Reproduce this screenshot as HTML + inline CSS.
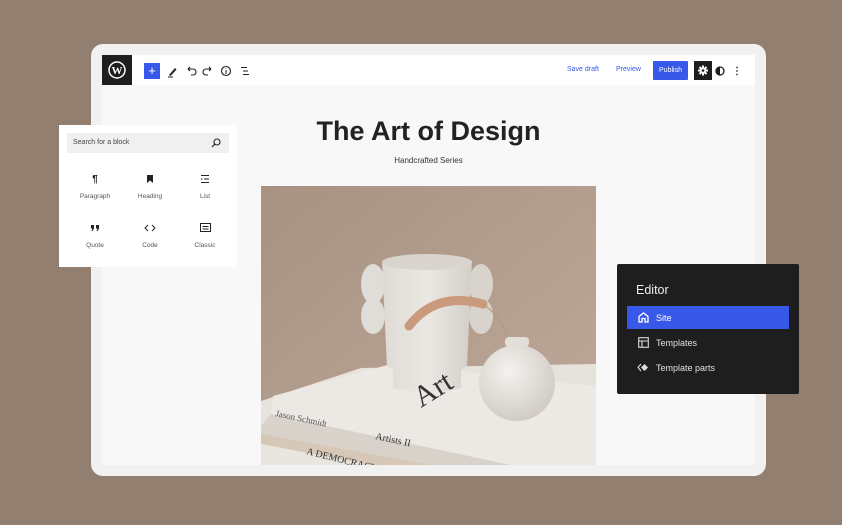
<!DOCTYPE html>
<html><head><meta charset="utf-8"><style>
*{margin:0;padding:0;box-sizing:border-box}
body{width:842px;height:525px;background:#927f6f;position:relative;overflow:hidden;font-family:"Liberation Sans",sans-serif}
.frame{position:absolute;left:91px;top:44px;width:675px;height:432px;background:#f1f1f1;border-radius:12px}
.editor{position:absolute;left:102px;top:55px;width:653px;height:410px;background:#f9f8f8;overflow:hidden}
.tb{position:absolute;left:0;top:0;width:653px;height:30px;background:#fff}
.wp{position:absolute;left:0;top:0;width:30px;height:30px;background:#1e1e1e}
.abs{position:absolute}
.title{position:absolute;left:0;width:653px;top:61px;text-align:center;font-size:27px;font-weight:bold;color:#222}
.sub{position:absolute;left:0;width:653px;top:101px;text-align:center;font-size:8px;color:#333}
.inserter{position:absolute;left:59px;top:125px;width:178px;height:142px;background:#fff}
.search{position:absolute;left:8px;top:8px;width:162px;height:20px;background:#f0f0f0;font-size:7px;color:#444;padding:6px 6px}
.item{position:absolute;width:50px;text-align:center;font-size:6.5px;color:#555}
.item .ic{height:14px;font-size:10px;color:#222;margin-bottom:5px}
.dark{position:absolute;left:617px;top:264px;width:182px;height:130px;background:#1e1e1e;border-radius:2px;color:#e0e0e0}
.row{position:absolute;left:10px;width:162px;height:23px;font-size:9px;padding:7px 0 0 29px}
</style></head><body>
<div class="frame"></div>
<div class="editor">
  <div class="tb">
    <div class="wp"><svg width="30" height="30" viewBox="0 0 30 30"><circle cx="15" cy="15" r="8" fill="none" stroke="#fff" stroke-width="1.5"/><text x="15" y="19" text-anchor="middle" font-family="Liberation Serif" font-weight="bold" font-size="11" fill="#fff">W</text></svg></div>
    <div class="abs" style="left:42px;top:8px;width:16px;height:16px;background:#3858e9;color:#fff;font-size:13px;line-height:15px;text-align:center">+</div>
    <svg class="abs" style="left:64px;top:8px" width="100" height="16" viewBox="0 0 100 16">
      <path d="M3 12 L9 5 L10.5 6.5 L4.5 13 Z" fill="#1e1e1e"/><path d="M2 14h5" stroke="#1e1e1e"/>
      <path d="M22 6 h5 a3 3 0 0 1 0 6 h-2 M22 6 l2 -2 M22 6 l2 2" fill="none" stroke="#1e1e1e" stroke-width="1.1"/>
      <path d="M45 6 h-5 a3 3 0 0 0 0 6 h2 M45 6 l-2 -2 M45 6 l-2 2" fill="none" stroke="#1e1e1e" stroke-width="1.1"/>
      <circle cx="60" cy="8" r="4.5" fill="none" stroke="#1e1e1e" stroke-width="1.1"/><path d="M60 7v4M60 5.5v.5" stroke="#1e1e1e"/>
      <path d="M75 4.5h6M77 8h5M77 11.5h6" stroke="#1e1e1e" stroke-width="1.1"/>
    </svg>
    <div class="abs" style="left:465px;top:11px;font-size:7px;color:#3858e9">Save draft</div>
    <div class="abs" style="left:514px;top:11px;font-size:7px;color:#3858e9">Preview</div>
    <div class="abs" style="left:551px;top:6px;width:35px;height:19px;background:#3858e9;color:#fff;font-size:7px;text-align:center;line-height:19px;border-radius:1px">Publish</div>
    <div class="abs" style="left:592px;top:6px;width:18px;height:19px;background:#1e1e1e">
      <svg width="18" height="19"><g fill="#fff"><circle cx="9" cy="9.5" r="3.2"/><rect x="8" y="4.5" width="2" height="10"/><rect x="4" y="8.5" width="10" height="2"/><rect x="8" y="4.5" width="2" height="10" transform="rotate(45 9 9.5)"/><rect x="8" y="4.5" width="2" height="10" transform="rotate(-45 9 9.5)"/></g><circle cx="9" cy="9.5" r="1.3" fill="#1e1e1e"/></svg>
    </div>
    <svg class="abs" style="left:613px;top:10px" width="30" height="12"><circle cx="5" cy="6" r="4" fill="none" stroke="#1e1e1e" stroke-width="1.3"/><path d="M5 2a4 4 0 0 0 0 8z" fill="#1e1e1e"/><circle cx="22" cy="2.5" r=".9" fill="#333"/><circle cx="22" cy="6" r=".9" fill="#333"/><circle cx="22" cy="9.5" r=".9" fill="#333"/></svg>
  </div>
  <div class="title">The Art of Design</div>
  <div class="sub">Handcrafted Series</div>
  <svg class="abs" style="left:159px;top:131px" width="335" height="279" viewBox="0 0 335 279">
    <defs>
      <linearGradient id="bg" x1="0" y1="0" x2="1" y2="1"><stop offset="0" stop-color="#a89282"/><stop offset="1" stop-color="#bea99a"/></linearGradient>
      <linearGradient id="v" x1="0" x2="1"><stop offset="0" stop-color="#dedad5"/><stop offset=".5" stop-color="#ebe8e4"/><stop offset="1" stop-color="#d3cec8"/></linearGradient>
      <radialGradient id="sv" cx=".4" cy=".35" r=".7"><stop offset="0" stop-color="#f4f2ef"/><stop offset="1" stop-color="#cfc9c2"/></radialGradient>
    </defs>
    <rect width="335" height="279" fill="url(#bg)"/>
    <polygon points="0,215 100,182 335,178 335,279 0,279" fill="#e6e2dc"/>
    <polygon points="12,210 130,178 335,200 335,279 250,279 10,228" fill="#ece9e4"/>
    <polygon points="10,228 250,279 0,279 0,240" fill="#d8d2ca"/>
    <polygon points="0,248 170,279 0,279" fill="#d6c7b6"/>
    <polygon points="0,258 110,279 0,279" fill="#e9e5df"/>
    <ellipse cx="112" cy="98" rx="12" ry="20" fill="#e0dcd7"/>
    <ellipse cx="112" cy="130" rx="12" ry="18" fill="#e0dcd7"/>
    <ellipse cx="220" cy="98" rx="12" ry="20" fill="#d8d3cd"/>
    <ellipse cx="220" cy="130" rx="12" ry="18" fill="#d8d3cd"/>
    <path d="M121 75 Q166 64 211 75 L206 180 L200 184 L200 202 Q166 210 132 202 L132 184 L126 180 Z" fill="url(#v)"/>
    <ellipse cx="166" cy="76" rx="45" ry="8" fill="#d9d4ce"/>
    <path d="M148 140 Q175 105 222 118" stroke="#c99a7d" stroke-width="9" fill="none" stroke-linecap="round"/>
    <path d="M222 118 Q242 132 247 155" stroke="#b99377" stroke-width="1" fill="none"/>
    <rect x="244" y="151" width="24" height="10" rx="4" fill="#e2ded8"/>
    <circle cx="256" cy="197" r="38" fill="url(#sv)"/>
    <text x="14" y="230" transform="rotate(12 14 230)" font-family="Liberation Serif" font-size="9" fill="#555">Jason Schmidt</text>
    <text x="114" y="253" transform="rotate(12 114 253)" font-family="Liberation Serif" font-size="10" fill="#333">Artists II</text>
    <text x="45" y="268" transform="rotate(14 45 268)" font-family="Liberation Serif" font-size="10" fill="#333">A DEMOCRACY</text>
    <text x="160" y="222" transform="rotate(-32 160 222)" font-family="Liberation Serif" font-size="30" fill="#333">Art</text>
  </svg>
</div>
<div class="inserter">
  <div class="search">Search for a block<svg style="position:absolute;right:8px;top:5px" width="10" height="10"><circle cx="6" cy="4" r="3" fill="none" stroke="#222" stroke-width="1.1"/><path d="M4 6L1 9" stroke="#222" stroke-width="1.2"/></svg></div>
  <div class="item" style="left:11px;top:49px"><div class="ic" style="font-weight:bold">¶</div>Paragraph</div>
  <div class="item" style="left:66px;top:49px"><div class="ic"><svg width="8" height="10"><path d="M1 1h6v8L4 6.5 1 9z" fill="#222"/></svg></div>Heading</div>
  <div class="item" style="left:121px;top:49px"><div class="ic"><svg width="10" height="10"><path d="M1 1.5h8M4 5h5M1 8.5h8M1 5h1.5" stroke="#222"/></svg></div>List</div>
  <div class="item" style="left:11px;top:98px"><div class="ic"><svg width="10" height="10"><path d="M1 2h3v3.5L2.5 8H1.5L2.5 5.5H1zM6 2h3v3.5L7.5 8H6.5L7.5 5.5H6z" fill="#222"/></svg></div>Quote</div>
  <div class="item" style="left:66px;top:98px"><div class="ic"><svg width="12" height="10"><path d="M4 2L1 5l3 3M8 2l3 3-3 3" fill="none" stroke="#222" stroke-width="1"/></svg></div>Code</div>
  <div class="item" style="left:121px;top:98px"><div class="ic"><svg width="11" height="9"><rect x=".5" y=".5" width="10" height="8" fill="none" stroke="#222"/><path d="M2.5 3.5h6M2.5 6h6" stroke="#222"/></svg></div>Classic</div>
</div>
<div class="dark">
  <div class="abs" style="left:19px;top:19px;font-size:12.5px;color:#eee">Editor</div>
  <div class="row" style="top:42px;background:#3858e9;color:#fff">
    <svg class="abs" style="left:11px;top:6px" width="11" height="11"><path d="M1 10V4.5L5.5 1 10 4.5V10H7V6.5H4V10Z" fill="none" stroke="#fff" stroke-width="1.3"/></svg>Site</div>
  <div class="row" style="top:67px">
    <svg class="abs" style="left:11px;top:6px" width="11" height="11"><rect x=".7" y=".7" width="9.6" height="9.6" fill="none" stroke="#ddd" stroke-width="1.1"/><path d="M1 4h9M4 4v6" stroke="#ddd" stroke-width="1.1"/></svg>Templates</div>
  <div class="row" style="top:92px">
    <svg class="abs" style="left:10px;top:6px" width="13" height="11"><path d="M4 5.5L7.5 2 11 5.5 7.5 9Z" fill="#ddd"/><path d="M4 2L1 5.5 4 9" fill="none" stroke="#ddd" stroke-width="1.1"/></svg>Template parts</div>
</div>
</body></html>
